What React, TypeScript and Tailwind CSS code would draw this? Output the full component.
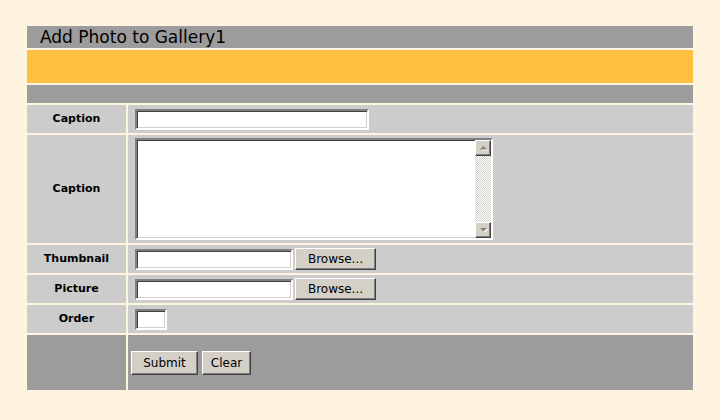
const FONT = "font-['DejaVu_Sans','Verdana',sans-serif]";

const INSET =
  "border-2 border-t-[#808080] border-l-[#808080] border-b-white border-r-white shadow-[inset_1px_1px_0_#404040,inset_-1px_-1px_0_#d4d0c8] bg-white";

const OUTSET =
  "border border-t-white border-l-white border-b-[#404040] border-r-[#404040] shadow-[inset_-1px_-1px_0_#808080] bg-[#d4d0c8] text-[12px] leading-none text-black";

function Label({ children, dark }: { children?: string; dark?: boolean }) {
  return (
    <div
      className={`flex items-center justify-center text-[11px] font-bold text-black ${
        dark ? "bg-[#9c9c9c]" : "bg-[#cccccc]"
      }`}
    >
      {children}
    </div>
  );
}

function Cell({ children }: { children: React.ReactNode }) {
  return <div className="flex items-center bg-[#cccccc] pl-[7px]">{children}</div>;
}

function Arrow({ down }: { down?: boolean }) {
  return (
    <div className={`flex h-[16px] w-[16px] items-center justify-center ${OUTSET}`}>
      <svg width="9" height="6" viewBox="0 0 9 6">
        {down ? (
          <>
            <path d="M2 2h7L5.5 5.5z" fill="#ffffff" />
            <path d="M1 1h7L4.5 4.5z" fill="#808080" />
          </>
        ) : (
          <>
            <path d="M2 5.5h7L5.5 2z" fill="#ffffff" />
            <path d="M1 4.5h7L4.5 1z" fill="#808080" />
          </>
        )}
      </svg>
    </div>
  );
}

function FileField() {
  return (
    <div className="flex items-center gap-[2px]">
      <input type="text" className={`h-[21px] w-[158px] outline-none ${INSET}`} />
      <button type="button" className={`h-[22px] w-[81px] ${OUTSET}`}>
        Browse...
      </button>
    </div>
  );
}

export default function App() {
  return (
    <div className={`min-h-screen bg-[#fff4df] pl-[27px] pt-[26px] ${FONT}`}>
      <div className="grid w-[666px] grid-cols-[99px_565px] grid-rows-[22px_33px_18px_28px_108px_28px_28px_28px_55px] gap-[2px]">
        <div className="col-span-2 bg-[#9c9c9c] pl-[13px] text-[17px] leading-[22px] text-black">
          Add Photo to Gallery1
        </div>
        <div className="col-span-2 bg-[#ffbf40]" />
        <div className="col-span-2 bg-[#9c9c9c]" />

        <Label>Caption</Label>
        <Cell>
          <input type="text" className={`h-[21px] w-[234px] outline-none ${INSET}`} />
        </Cell>

        <Label>Caption</Label>
        <Cell>
          <div className={`flex h-[102px] w-[358px] ${INSET}`}>
            <textarea className="flex-1 resize-none outline-none" />
            <div className="flex w-[16px] flex-col">
              <Arrow />
              <div className="flex-1 bg-[repeating-conic-gradient(#d4d0c8_0%_25%,#ffffff_0%_50%)] bg-[length:2px_2px]" />
              <Arrow down />
            </div>
          </div>
        </Cell>

        <Label>Thumbnail</Label>
        <Cell>
          <FileField />
        </Cell>

        <Label>Picture</Label>
        <Cell>
          <FileField />
        </Cell>

        <Label>Order</Label>
        <Cell>
          <input type="text" className={`h-[21px] w-[32px] outline-none ${INSET}`} />
        </Cell>

        <Label dark />
        <div className="flex items-center gap-[4px] bg-[#9c9c9c] pl-[3px]">
          <button type="button" className={`h-[24px] w-[67px] ${OUTSET}`}>
            Submit
          </button>
          <button type="button" className={`h-[24px] w-[49px] ${OUTSET}`}>
            Clear
          </button>
        </div>
      </div>
    </div>
  );
}
